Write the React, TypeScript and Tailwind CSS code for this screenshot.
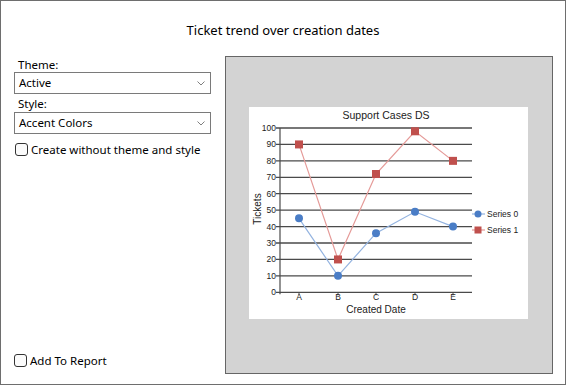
const cats = ["A", "B", "C", "D", "E"];
const xs = [50, 89, 127, 166, 204];
const series0 = [45, 10, 36, 49, 40];
const series1 = [90, 20, 72, 98, 80];
const yOf = (v: number) => 185.3 - v * 1.643;

const Chevron = () => (
  <svg width="8" height="5" viewBox="0 0 8 5" className="mr-[5px]">
    <path d="M0.5 0.5 L4 4 L7.5 0.5" fill="none" stroke="#707070" strokeWidth="0.9" />
  </svg>
);

const Select = ({ value }: { value: string }) => (
  <div className="flex h-[22px] items-center justify-between border border-[#7a7a7a] bg-white pl-[4px] text-[11.5px] text-black">
    <span>{value}</span>
    <Chevron />
  </div>
);

const Check = ({ label }: { label: string }) => (
  <div className="flex items-center gap-[3px] text-[11.5px] text-black">
    <span className="h-[13px] w-[13px] rounded-[3px] border border-[#333] bg-[#fbfbfb]" />
    <span>{label}</span>
  </div>
);

const Chart = () => (
  <svg width="279" height="212" viewBox="0 0 279 212" style={{ fontFamily: "'Liberation Sans', Arial, sans-serif" }}>
    <text x="137" y="12" fontSize="10.5" textAnchor="middle" fill="#222">
      Support Cases DS
    </text>
    {[0, 10, 20, 30, 40, 50, 60, 70, 80, 90, 100].map((v) => (
      <g key={v}>
        <line x1="27" x2="223" y1={yOf(v)} y2={yOf(v)} stroke="#4a4a4a" strokeWidth="1.3" />
        <text x="27" y={yOf(v) + 3} fontSize="8.5" textAnchor="end" fill="#222">
          {v}
        </text>
      </g>
    ))}
    <line x1="31" x2="31" y1={yOf(100)} y2={yOf(0) + 2} stroke="#4a4a4a" strokeWidth="1.2" />
    {cats.map((c, i) => (
      <g key={c}>
        <line x1={xs[i]} x2={xs[i]} y1={yOf(0)} y2={yOf(0) + 3} stroke="#4a4a4a" strokeWidth="1" />
        <text x={xs[i]} y="193" fontSize="8.5" textAnchor="middle" fill="#222">
          {c}
        </text>
      </g>
    ))}
    <text x="127" y="206" fontSize="10" textAnchor="middle" fill="#222">
      Created Date
    </text>
    <text x="12" y="102" fontSize="10" textAnchor="middle" fill="#222" transform="rotate(-90 12 102)">
      Tickets
    </text>
    <polyline
      points={series1.map((v, i) => `${xs[i]},${yOf(v)}`).join(" ")}
      fill="none"
      stroke="#e59a98"
      strokeWidth="1.2"
    />
    <polyline
      points={series0.map((v, i) => `${xs[i]},${yOf(v)}`).join(" ")}
      fill="none"
      stroke="#93b3e0"
      strokeWidth="1.2"
    />
    {series1.map((v, i) => (
      <rect key={i} x={xs[i] - 4} y={yOf(v) - 4} width="8" height="8" fill="#c0504d" />
    ))}
    {series0.map((v, i) => (
      <circle key={i} cx={xs[i]} cy={yOf(v)} r="4" fill="#4a7dc6" />
    ))}
    <line x1="223" x2="236" y1="107" y2="107" stroke="#93b3e0" strokeWidth="1.2" />
    <circle cx="229" cy="107" r="3.5" fill="#4a7dc6" />
    <text x="238" y="110" fontSize="8.5" fill="#222">
      Series 0
    </text>
    <line x1="223" x2="236" y1="123" y2="123" stroke="#e59a98" strokeWidth="1.2" />
    <rect x="225.5" y="119.5" width="7" height="7" fill="#c0504d" />
    <text x="238" y="126" fontSize="8.5" fill="#222">
      Series 1
    </text>
  </svg>
);

export default function App() {
  return (
    <div
      className="flex h-[385px] w-[566px] flex-col border border-[#6e6e6e] bg-white"
      style={{ fontFamily: "'Noto Sans', 'Open Sans', sans-serif" }}
    >
      <div className="pt-[19px] text-center text-[13px] leading-[20px] text-black">Ticket trend over creation dates</div>
      <div className="flex flex-1 pt-[16px] pb-[10px]">
        <div className="ml-[13px] flex w-[197px] flex-col">
          <div className="mt-[1px] pl-[4px] text-[11.5px] leading-[15px] text-black">Theme:</div>
          <Select value="Active" />
          <div className="mt-[2px] pl-[4px] text-[11.5px] leading-[16px] text-black">Style:</div>
          <Select value="Accent Colors" />
          <div className="mt-[7px] pl-[1px]">
            <Check label="Create without theme and style" />
          </div>
          <div className="mt-auto mb-[5px] pl-[0px]">
            <Check label="Add To Report" />
          </div>
        </div>
        <div className="ml-[14px] flex w-[328px] items-start justify-start border border-[#666] bg-[#d3d3d3] pt-[50px] pl-[23px]">
          <div className="bg-white">
            <Chart />
          </div>
        </div>
      </div>
    </div>
  );
}
